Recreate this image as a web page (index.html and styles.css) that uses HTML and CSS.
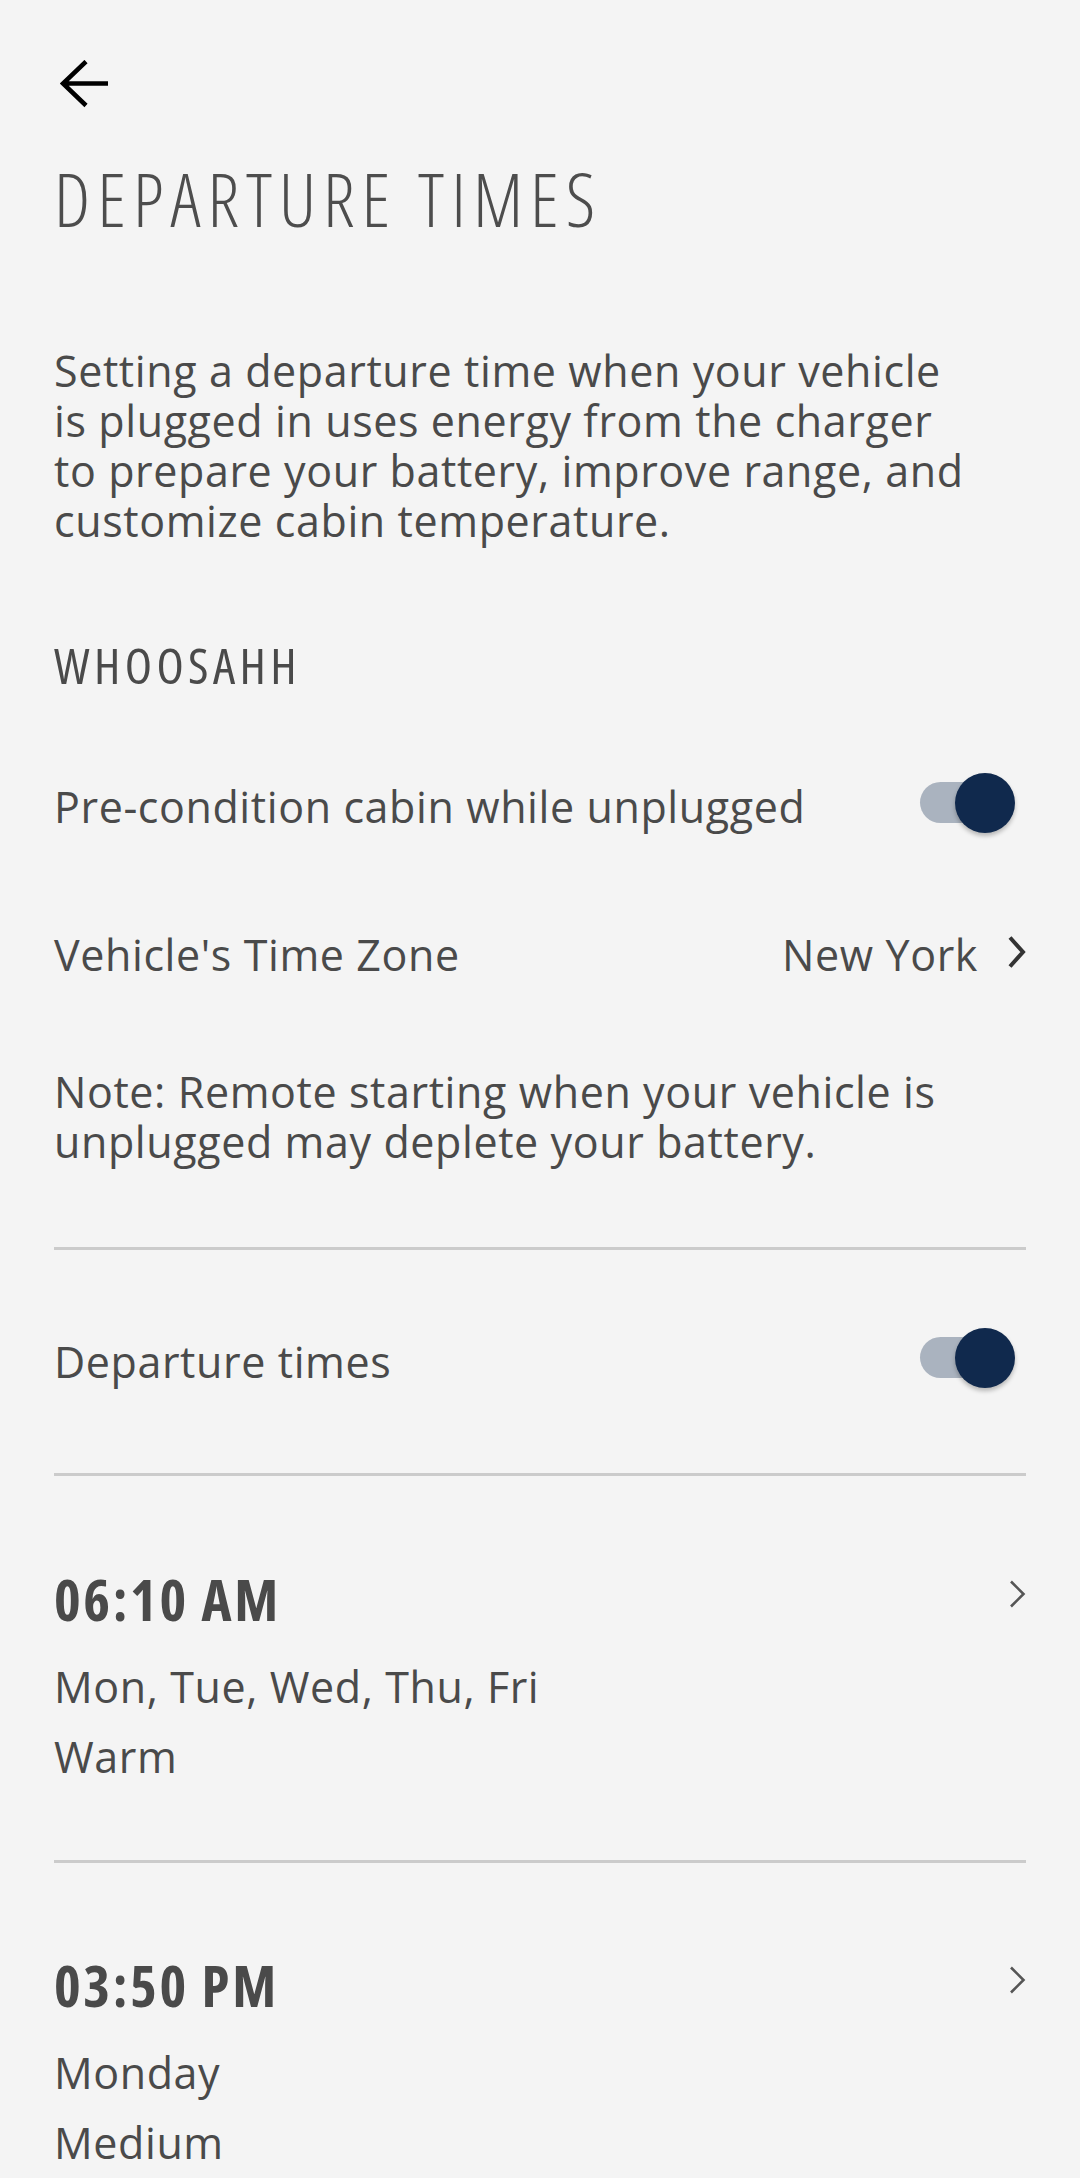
FILE: index.html
```html
<html>
    <head>
        <link rel="stylesheet" href="styles.css">
    </head>
    <body>
        <header class="top-bar">
            <svg class="back" width="48" height="48" viewBox="0 0 48 48">
                <path d="M48 23.5H3M26 1.5L3 23.5L26 45.5" fill="none" stroke="#000" stroke-width="4.5"/>
            </svg>
        </header>
        <main class="page">
            <h1 class="title">DEPARTURE TIMES</h1>
            <p class="intro">Setting a departure time when your vehicle is plugged in uses energy from the charger to prepare your battery, improve range, and customize cabin temperature.</p>
            <h2 class="vehicle-name">WHOOSAHH</h2>
            <div class="row toggle-row">
                <span class="label">Pre-condition cabin while unplugged</span>
                <span class="switch"><span class="knob"></span></span>
            </div>
            <div class="row link-row">
                <span class="label">Vehicle's Time Zone</span>
                <span class="value">New York
                    <svg class="chevron" width="20" height="34" viewBox="0 0 20 34">
                        <path d="M4 2.5L17 17L4 31.5" fill="none" stroke="#333" stroke-width="4"/>
                    </svg>
                </span>
            </div>
            <p class="note">Note: Remote starting when your vehicle is unplugged may deplete your battery.</p>
            <hr class="divider">
            <div class="row toggle-row">
                <span class="label">Departure times</span>
                <span class="switch"><span class="knob"></span></span>
            </div>
            <hr class="divider">
            <div class="schedule">
                <div class="schedule-info">
                    <div class="time">06:10 AM</div>
                    <div class="detail first">Mon, Tue, Wed, Thu, Fri</div>
                    <div class="detail">Warm</div>
                </div>
                <svg class="chevron-small" width="18" height="28" viewBox="0 0 18 28">
                    <path d="M3 1.5L15.5 14L3 26.5" fill="none" stroke="#555" stroke-width="2.6"/>
                </svg>
            </div>
            <hr class="divider">
            <div class="schedule">
                <div class="schedule-info">
                    <div class="time">03:50 PM</div>
                    <div class="detail first">Monday</div>
                    <div class="detail">Medium</div>
                </div>
                <svg class="chevron-small" width="18" height="28" viewBox="0 0 18 28">
                    <path d="M3 1.5L15.5 14L3 26.5" fill="none" stroke="#555" stroke-width="2.6"/>
                </svg>
            </div>
        </main>
    </body>
</html>
```

FILE: styles.css
```css
body{
    margin: 0;
    background-color: #f4f4f4;
    color: #4a4a4a;
    font-family: "Open Sans", "Noto Sans", sans-serif;
}
.top-bar{
    padding: 60px 0 0 60px;
}
.back{
    display: block;
}
.page{
    padding: 0 54px;
}
.title{
    margin: 54px 0 0 0;
    font-size: 74px;
    line-height: 74px;
    font-weight: 300;
    font-stretch: 80%;
    letter-spacing: 7px;
    color: #4d4d4d;
}
.intro, .note{
    margin: 110px 0 0 0;
    font-size: 43px;
    line-height: 50px;
    letter-spacing: 0.6px;
}
.intro{
    padding-right: 56px;
}
.note{
    margin-top: 87px;
}
.vehicle-name{
    margin: 89px 0 0 0;
    font-size: 50px;
    line-height: 60px;
    font-weight: 400;
    font-stretch: 80%;
    letter-spacing: 4.4px;
}
.row{
    display: flex;
    align-items: center;
    justify-content: space-between;
    font-size: 43px;
    line-height: 50px;
    letter-spacing: 0.6px;
}
.toggle-row{
    margin-top: 78px;
}
.link-row{
    margin-top: 89px;
}
.value{
    display: flex;
    align-items: center;
    gap: 28px;
}
.chevron{
    display: block;
    margin-top: -6px;
}
.switch{
    position: relative;
    width: 95px;
    height: 60px;
    margin: 0 11px 8px 0;
}
.switch::before{
    content: "";
    position: absolute;
    left: 0;
    top: 9px;
    width: 80px;
    height: 41px;
    border-radius: 21px;
    background-color: #aab3bf;
}
.knob{
    position: absolute;
    right: 0;
    top: 0;
    width: 60px;
    height: 60px;
    border-radius: 50%;
    background-color: #10294d;
    box-shadow: 0 3px 4px rgba(0,0,0,0.25);
}
.divider{
    border: 0;
    height: 3px;
    margin: 80px 0 0 0;
    background-color: #cbcbcb;
}
.toggle-row + .divider{
    margin-top: 77px;
}
.schedule{
    display: flex;
    justify-content: space-between;
    align-items: flex-start;
    padding: 93px 0 68px 0;
}
.divider + .schedule + .divider + .schedule{
    padding-top: 92px;
}
.divider + .schedule + .divider{
    margin-top: 0;
}
.time{
    font-size: 57px;
    line-height: 60px;
    font-weight: 700;
    font-stretch: 80%;
    letter-spacing: 2.6px;
}
.detail{
    font-size: 43px;
    line-height: 70px;
    letter-spacing: 0.6px;
}
.detail.first{
    margin-top: 23px;
}
.chevron-small{
    display: block;
    margin-top: 11px;
}
```
